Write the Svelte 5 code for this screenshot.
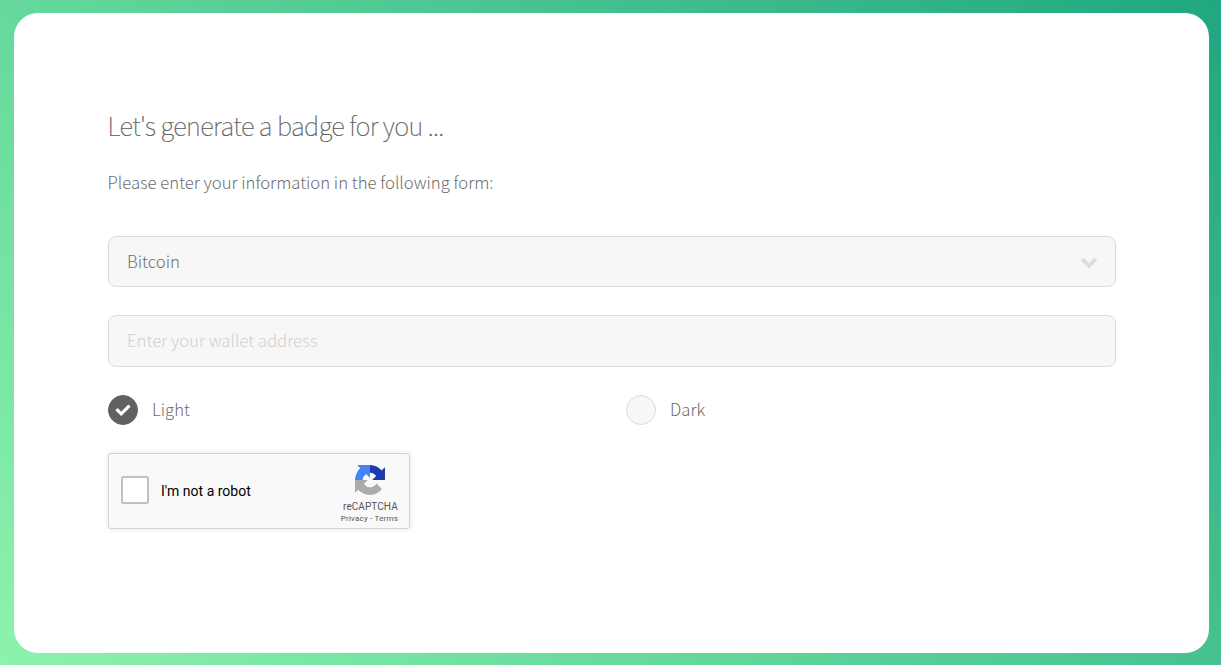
<script>
  let currency = "Bitcoin";
  let address = "";
  let theme = "light";
  let human = false;
  const themes = [
    { id: "light", label: "Light" },
    { id: "dark", label: "Dark" }
  ];
</script>

<style>
  * {
    box-sizing: border-box;
    margin: 0;
  }
  :global(body) {
    background: linear-gradient(45deg, #8cf3ac, #20a780);
  }
  .page {
    height: 665px;
    padding: 13px 12px 12px 14px;
    font-family: "Noto Sans CJK JP", "Noto Sans CJK SC", sans-serif;
    font-weight: 300;
    color: #6e6e6e;
  }
  .card {
    height: 640px;
    padding: 92px 93px 0 94px;
    background: #fff;
    border-radius: 24px;
  }
  h1 {
    height: 40px;
    margin-left: -0.5px;
    font-size: 25.5px;
    font-weight: 100;
    line-height: 40px;
    letter-spacing: -0.59px;
    white-space: nowrap;
    color: #616161;
    -webkit-text-stroke: 0.2px #616161;
  }
  p {
    height: 30px;
    margin: 22px 0 0 -0.5px;
    font-size: 16.73px;
    line-height: 30px;
  }
  form {
    display: grid;
    grid-template-columns: 1fr 1fr;
    gap: 28px;
    margin-top: 39px;
  }
  .field {
    position: relative;
    grid-column: 1 / -1;
    height: 51.3px;
  }
  .field select,
  .field input {
    width: 100%;
    height: 100%;
    padding: 0 18px 2px;
    appearance: none;
    background: #f7f7f7;
    border: 1px solid #dcdcdc;
    border-radius: 8px;
    outline: 0;
    color: inherit;
    font: inherit;
    font-size: 16.75px;
  }
  .field input::placeholder {
    color: #d0d0d0;
    opacity: 1;
  }
  .arrow {
    position: absolute;
    top: 21px;
    right: 18px;
    width: 18px;
    height: 12px;
    pointer-events: none;
  }
  .radio {
    display: flex;
    align-items: center;
    gap: 14px;
    height: 30px;
    font-size: 16.75px;
  }
  .radio .label {
    padding-bottom: 1px;
  }
  .radio input,
  .captcha input {
    position: absolute;
    opacity: 0;
  }
  .dot {
    display: flex;
    align-items: center;
    justify-content: center;
    width: 30px;
    height: 30px;
    background: #f7f7f7;
    border: 1px solid #dcdcdc;
    border-radius: 50%;
  }
  .dot.checked {
    background: #616161;
    border-color: #616161;
  }
  .captcha {
    display: flex;
    justify-content: space-between;
    width: 302px;
    height: 76px;
    padding: 0 11px 0 12px;
    background: #f9f9f9;
    border: 1px solid #d3d3d3;
    border-radius: 3px;
    box-shadow: 0 0 4px 1px rgba(0, 0, 0, 0.08);
    font-family: Roboto, sans-serif;
    font-weight: 400;
  }
  .captcha label {
    display: flex;
    align-items: center;
    gap: 12px;
    height: 72px;
    color: #000;
    font-size: 14px;
  }
  .captcha .label {
    padding-top: 2px;
  }
  .box {
    width: 28px;
    height: 28px;
    background: #fff;
    border: 2px solid #c1c1c1;
    border-radius: 2px;
  }
  .box.checked {
    background: #4285f4;
  }
  .brand {
    display: flex;
    flex-direction: column;
    align-items: center;
    padding-top: 11px;
    color: #555;
  }
  .brand svg {
    width: 30px;
    height: 30px;
    margin-left: 2px;
  }
  .name {
    margin: 6px 0 0 2px;
    font-size: 10px;
    line-height: 12px;
    letter-spacing: 0.08px;
  }
  .links {
    font-size: 8px;
    line-height: 10px;
    margin-top: 1px;
    letter-spacing: 0.18px;
    white-space: nowrap;
  }
</style>

<div class="page">
  <div class="card">
    <h1>Let's generate a badge for you ...</h1>
    <p>Please enter your information in the following form:</p>
    <form on:submit|preventDefault>
      <div class="field">
        <select bind:value={currency} aria-label="Currency">
          <option value="Bitcoin">Bitcoin</option>
        </select>
        <svg class="arrow" viewBox="0 0 18 12">
          <path d="M2.2 2.1 9 8.8l6.8-6.7" fill="none" stroke="#dcdcdc" stroke-width="3.8" />
        </svg>
      </div>
      <div class="field">
        <input bind:value={address} type="text" placeholder="Enter your wallet address" />
      </div>
      {#each themes as item}
        <label class="radio">
          <input type="radio" bind:group={theme} value={item.id} />
          <span class="dot" class:checked={theme === item.id}>
            {#if theme === item.id}
              <svg width="16" height="12" viewBox="0 0 16 12">
                <path d="M1.5 5.2 6.2 9.8l8.3-8.2" fill="none" stroke="#fff" stroke-width="3.2" />
              </svg>
            {/if}
          </span>
          <span class="label">{item.label}</span>
        </label>
      {/each}
      <div class="captcha">
        <label>
          <input type="checkbox" bind:checked={human} />
          <span class="box" class:checked={human}></span>
          <span class="label">I'm not a robot</span>
        </label>
        <div class="brand">
          <svg viewBox="0 0 64 64">
            <path fill="#1c3aa9" d="M64 31.955l-.033-1.37V4.687l-7.16 7.16C50.948 4.674 42.033.093 32.05.093c-10.4 0-19.622 4.96-25.458 12.64l11.736 11.86a15.55 15.55 0 0 1 4.754-5.334c2.05-1.6 4.952-2.906 8.968-2.906.485 0 .86.057 1.135.163 4.976.393 9.288 3.14 11.828 7.124l-8.307 8.307L64 31.953" />
            <path fill="#4285f4" d="M31.862.094l-1.37.033H4.594l7.16 7.16C4.58 13.147 0 22.06 0 32.046c0 10.4 4.96 19.622 12.64 25.458L24.5 45.768a15.55 15.55 0 0 1-5.334-4.754c-1.6-2.05-2.906-4.952-2.906-8.968 0-.485.057-.86.163-1.135.393-4.976 3.14-9.288 7.124-11.828l8.307 8.307L31.86.095" />
            <path fill="#ababab" d="M.001 32.045l.033 1.37v25.898l7.16-7.16c5.86 7.173 14.774 11.754 24.76 11.754 10.4 0 19.622-4.96 25.458-12.64l-11.736-11.86a15.55 15.55 0 0 1-4.754 5.334c-2.05 1.6-4.952 2.906-8.968 2.906-.485 0-.86-.057-1.135-.163-4.976-.393-9.288-3.14-11.828-7.124l8.307-8.307c-10.522.04-22.4.066-27.295-.005" />
          </svg>
          <span class="name">reCAPTCHA</span>
          <span class="links">Privacy&nbsp;-&nbsp;Terms</span>
        </div>
      </div>
    </form>
  </div>
</div>
